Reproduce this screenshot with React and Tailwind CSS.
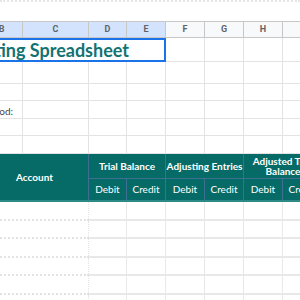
import React from 'react';

const cols = ['B', 'C', 'D', 'E', 'F', 'G', 'H', 'I'];
const selected = ['B', 'C', 'D', 'E'];
const grid = 'grid grid-cols-[42px_66px_38px_39px_39px_39px_39px_39px]';

const BlankRow = ({ h, children }) => (
  <div className={`${grid} ${h}`}>
    {children ||
      cols.map((c) => (
        <div key={c} className="border-r border-b border-[#e3e3e3]" />
      ))}
  </div>
);

const App = () => {
  return (
    <div className="w-[300px] h-[300px] overflow-hidden bg-white" style={{ fontFamily: 'Lato, "Noto Sans", sans-serif' }}>
      {/* toolbar edge */}
      <div className="h-[21px] border-t-2 border-dotted border-[#e6e6e6]" />

      <div className="ml-[-19px] w-[341px]">
        {/* Column letters */}
        <div className={`${grid} h-[17px] border-y border-[#c7c7c7]`}>
          {cols.map((c) => (
            <div
              key={c}
              className={`flex items-center justify-center border-r border-[#c7c7c7] text-[9px] font-bold text-[#5f6368] ${
                selected.includes(c) ? 'bg-[#d3e3fd] text-[#3c4043]' : 'bg-[#f8f9fa]'
              }`}
              style={{ fontFamily: 'Roboto, Arial, sans-serif' }}
            >
              {c}
            </div>
          ))}
        </div>

        {/* Title */}
        <BlankRow h="h-[24px]">
          <div className="col-span-4 flex items-center justify-end pr-[35px] border-2 border-[#1a73e8]">
            <span className="whitespace-nowrap text-[18px] font-bold text-[#137272] leading-none">
              Adjusting Spreadsheet
            </span>
          </div>
          {cols.slice(4).map((c) => (
            <div key={c} className="border-r border-b border-[#e3e3e3]" />
          ))}
        </BlankRow>

        <BlankRow h="h-[22px]" />
        <BlankRow h="h-[17px]" />
        <BlankRow h="h-[18px]">
          <div className="flex items-end justify-end pr-[9px] pb-[1px] border-r border-b border-[#e3e3e3]">
            <span className="whitespace-nowrap text-[10px] leading-[12px] text-[#444]">Period:</span>
          </div>
          {cols.slice(1).map((c) => (
            <div key={c} className="border-r border-b border-[#e3e3e3]" />
          ))}
        </BlankRow>
        <BlankRow h="h-[17px]" />
        <BlankRow h="h-[18px]" />

        {/* Table header */}
        <div className={`${grid} grid-rows-[25px_21px] bg-[#066b66] text-white text-[10px] border-b-2 border-[#2e8a84]`}>
          <div className="col-span-2 row-span-2 flex items-center justify-center font-bold border-r border-[#3d6f92]">
            Account
          </div>
          <div className="col-span-2 flex items-center justify-center font-bold border-r border-b border-[#3d6f92]">
            Trial Balance
          </div>
          <div className="col-span-2 flex items-center justify-center font-bold border-r border-b border-[#3d6f92]">
            Adjusting Entries
          </div>
          <div className="col-span-2 flex items-center justify-center text-center font-bold leading-[10px] border-b border-[#3d6f92]">
            Adjusted Trial Balance
          </div>
          {['Debit', 'Credit', 'Debit', 'Credit', 'Debit', 'Credit'].map((t, i) => (
            <div key={i} className="flex items-center justify-center border-r border-[#3d6f92]">
              {t}
            </div>
          ))}
        </div>

        {/* Data rows */}
        {[0, 1, 2, 3, 4, 5].map((r) => (
          <div key={r} className={`${grid} h-[18.5px]`}>
            <div className="col-span-2 border-r border-dotted border-b-2 border-b-solid border-[#e3e3e3]" />
            {cols.slice(2).map((c) => (
              <div key={c} className="border-r border-b-2 border-[#e8e8e8]" />
            ))}
          </div>
        ))}
      </div>
    </div>
  );
};

export default App;
